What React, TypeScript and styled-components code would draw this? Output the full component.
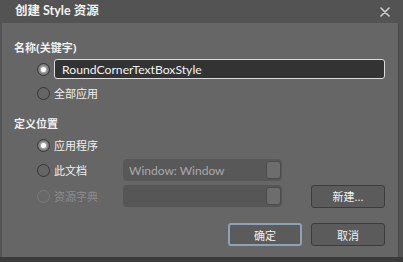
import React from 'react'
import styled, { createGlobalStyle, css } from 'styled-components'

const GlobalStyle = createGlobalStyle`
  html, body {
    margin: 0;
    padding: 0;
    background: #545454;
  }
  body {
    font-family: 'Noto Sans', 'Noto Sans CJK SC', sans-serif;
  }
`

const CJK = `'Noto Sans', 'Noto Sans CJK SC', sans-serif`
const LATIN = `Lato, 'Noto Sans', sans-serif`

const Window = styled.div`
  width: 403px;
  height: 262px;
  background: #535353;
  display: flex;
  flex-direction: column;
  overflow: hidden;
`

const TitleBar = styled.div`
  height: 23px;
  flex: 0 0 23px;
  display: flex;
  align-items: center;
  justify-content: space-between;
  padding: 0 13px 0 15px;
`

const Title = styled.div`
  font-family: Lato, 'Noto Sans CJK SC', sans-serif;
  font-weight: 700;
  font-size: 12.5px;
  color: #f4f4f4;
  line-height: 1;
`

const Body = styled.div`
  flex: 1;
  margin-left: 2px;
  width: 397px;
  background: #666666;
  border-right: 1px solid #474747;
  box-sizing: border-box;
  padding: 15px 13px 0 12px;
  display: flex;
  flex-direction: column;
`

const BottomEdge = styled.div`
  flex: 0 0 5px;
  background: #3b3b3b;
`

const SectionLabel = styled.div<{ $gap?: number }>`
  height: 18px;
  margin-top: ${({ $gap }) => $gap ?? 0}px;
  display: flex;
  align-items: center;
  font-family: ${CJK};
  font-weight: 700;
  font-size: 11px;
  color: #f0f0f0;
`

const Row = styled.div<{ $h: number; $gap: number }>`
  height: ${({ $h }) => $h}px;
  margin-top: ${({ $gap }) => $gap}px;
  padding-left: 23px;
  display: flex;
  align-items: center;
`

const RadioOption = styled.div<{ $w?: number }>`
  display: flex;
  align-items: center;
  gap: 4px;
  ${({ $w }) => ($w ? `width: ${$w}px; flex: 0 0 ${$w}px;` : '')}
`

const RadioCircle = styled.span<{ $checked?: boolean; $disabled?: boolean }>`
  width: 13px;
  height: 13px;
  box-sizing: border-box;
  border-radius: 50%;
  border: 1.5px solid ${({ $disabled }) => ($disabled ? '#7a7a7a' : '#363636')};
  background: ${({ $disabled }) => ($disabled ? '#686868' : '#656565')};
  display: flex;
  align-items: center;
  justify-content: center;
  flex: 0 0 13px;
  ${({ $checked }) =>
    $checked &&
    css`
      background: #777;
      &::after {
        content: '';
        width: 5px;
        height: 5px;
        border-radius: 50%;
        background: #ffffff;
        box-shadow: 0 0 2px 1px rgba(255, 255, 255, 0.55);
      }
    `}
`

const OptionText = styled.span<{ $disabled?: boolean }>`
  font-family: ${CJK};
  font-size: 11px;
  color: ${({ $disabled }) => ($disabled ? '#8b8b8b' : '#f0f0f0')};
  line-height: 1;
`

const TextInput = styled.div`
  flex: 1;
  height: 20px;
  margin-left: 4px;
  box-sizing: border-box;
  background: #333333;
  border: 1px solid #dcdcdc;
  border-radius: 3px;
  display: flex;
  align-items: center;
  padding-left: 7px;
  font-family: ${LATIN};
  font-size: 12.2px;
  color: #f2f2f2;
`

const Combo = styled.div<{ $dark?: boolean }>`
  width: 159px;
  height: 22px;
  box-sizing: border-box;
  border-radius: 4px;
  background: ${({ $dark }) => ($dark ? '#565656' : '#585858')};
  display: flex;
  align-items: center;
  justify-content: space-between;
  padding: 0 1px 0 6px;
  font-family: ${LATIN};
  font-size: 12px;
  color: #a9a9a9;
`

const ComboButton = styled.span`
  width: 15px;
  height: 18px;
  box-sizing: border-box;
  border-radius: 3px;
  background: #6d6d6d;
  border: 1px solid #4c4c4c;
`

const Button = styled.div<{ $primary?: boolean }>`
  width: 74px;
  height: 23px;
  box-sizing: border-box;
  border-radius: 3px;
  background: #5b5b5b;
  border: ${({ $primary }) => ($primary ? '2px solid #8ea2b7' : '1px solid #3c3c3c')};
  display: flex;
  align-items: center;
  justify-content: center;
  font-family: ${CJK};
  font-size: 11px;
  color: #f2f2f2;
`

const Spacer = styled.div`
  flex: 1;
`

const ButtonRow = styled.div`
  height: 23px;
  margin-top: 16px;
  display: flex;
  justify-content: flex-end;
  gap: 9px;
`

function CloseIcon() {
  return (
    <svg width="10" height="10" viewBox="0 0 10 10">
      <path d="M1 1 L9 9 M9 1 L1 9" stroke="#cfcfcf" strokeWidth="1.6" strokeLinecap="round" />
    </svg>
  )
}

export default function App() {
  return (
    <>
      <GlobalStyle />
      <Window>
        <TitleBar>
          <Title>创建 Style 资源</Title>
          <CloseIcon />
        </TitleBar>
        <Body>
          <SectionLabel>名称(关键字)</SectionLabel>
          <Row $h={20} $gap={3}>
            <RadioCircle $checked />
            <TextInput>RoundCornerTextBoxStyle</TextInput>
          </Row>
          <Row $h={20} $gap={4}>
            <RadioOption>
              <RadioCircle />
              <OptionText>全部应用</OptionText>
            </RadioOption>
          </Row>

          <SectionLabel $gap={11}>定义位置</SectionLabel>
          <Row $h={20} $gap={3}>
            <RadioOption>
              <RadioCircle $checked />
              <OptionText>应用程序</OptionText>
            </RadioOption>
          </Row>
          <Row $h={22} $gap={4}>
            <RadioOption $w={86}>
              <RadioCircle />
              <OptionText>此文档</OptionText>
            </RadioOption>
            <Combo>
              <span>Window: Window</span>
              <ComboButton />
            </Combo>
          </Row>
          <Row $h={22} $gap={4}>
            <RadioOption $w={86}>
              <RadioCircle $disabled />
              <OptionText $disabled>资源字典</OptionText>
            </RadioOption>
            <Combo $dark>
              <span />
              <ComboButton />
            </Combo>
            <Spacer />
            <Button>新建...</Button>
          </Row>
          <ButtonRow>
            <Button $primary>确定</Button>
            <Button>取消</Button>
          </ButtonRow>
        </Body>
        <BottomEdge />
      </Window>
    </>
  )
}
